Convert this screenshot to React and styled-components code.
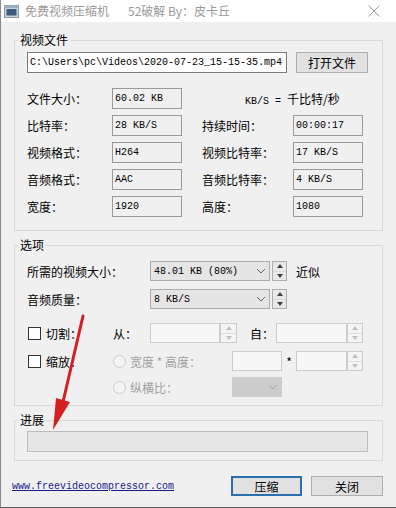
import React from 'react';
import styled, { createGlobalStyle } from 'styled-components';

const GlobalStyle = createGlobalStyle`
	html, body {
		margin: 0;
		padding: 0;
		background: #f0f0f0;
	}
	body {
		font-family: "Noto Sans CJK SC", "Noto Sans", sans-serif;
		font-size: 12px;
		color: #000;
	}
`;

const CJK = `"Noto Sans CJK SC", "Noto Sans", sans-serif`;
const MONO = `"Liberation Mono", "DejaVu Sans Mono", monospace`;

const Window = styled.div`
	position: relative;
	width: 395px;
	height: 507px;
	background: #f0f0f0;
	border-left: 1px solid #8a8a8a;
	border-bottom: 1px solid #5a5a5a;
	overflow: hidden;
	font-family: ${CJK};
	font-size: 12px;
`;

const TitleBar = styled.div`
	height: 22px;
	background: #ffffff;
	display: flex;
	align-items: center;
	padding: 0 0 0 3px;
	color: #999;
	font-size: 12px;
	line-height: 16px;
`;

const TitleText = styled.span`
	margin-left: ${(p) => p.$gap || 0}px;
	white-space: pre;
`;

const CloseButton = styled.div`
	margin-left: auto;
	width: 44px;
	height: 22px;
	display: flex;
	align-items: center;
	justify-content: center;
`;

const Body = styled.div`
	padding: 0 13px;
`;

const Group = styled.fieldset`
	margin: ${(p) => p.$top}px 0 0 0;
	padding: 0;
	border: 1px solid #d9d9d9;
	min-width: 0;
`;

const Legend = styled.legend`
	margin-left: 3px;
	padding: 0 2px;
	font-size: 12px;
	line-height: 16px;
	height: 16px;
`;

const GroupInner = styled.div`
	padding: ${(p) => p.$pad};
`;

const Row = styled.div`
	display: flex;
	align-items: center;
	height: ${(p) => p.$h || 20}px;
	margin-top: ${(p) => p.$top || 0}px;
`;

const PathInput = styled.div`
	width: 256px;
	height: 19px;
	border: 1px solid #7a7a7a;
	background: #fff;
	font-family: ${MONO};
	font-size: 10px;
	line-height: 19px;
	padding-left: 2px;
	white-space: nowrap;
	overflow: hidden;
`;

const Button = styled.div`
	box-sizing: border-box;
	width: ${(p) => p.$w}px;
	height: ${(p) => p.$h || 20}px;
	margin-left: ${(p) => p.$left || 0}px;
	background: #e1e1e1;
	border: ${(p) => (p.$focus ? '2px solid #2b6fae' : '1px solid #adadad')};
	display: flex;
	align-items: center;
	justify-content: center;
	font-size: 12px;
`;

const InfoGrid = styled.div`
	display: grid;
	grid-template-columns: 85px 70px 20px 91px 70px;
	grid-auto-rows: 21px;
	row-gap: 6px;
	align-items: center;
	margin-top: 15px;
`;

const InfoLabel = styled.div`
	grid-column: ${(p) => p.$col};
	white-space: nowrap;
`;

const InfoBox = styled.div`
	grid-column: ${(p) => p.$col};
	box-sizing: border-box;
	height: 21px;
	border: 1px solid #9a9a9a;
	background: #f0f0f0;
	font-family: ${MONO};
	font-size: 10px;
	line-height: 19px;
	padding-left: 2px;
	white-space: nowrap;
`;

const Note = styled.div`
	grid-column: 3 / 6;
	padding-left: 63px;
	white-space: nowrap;
`;

const Mono = styled.span`
	font-family: ${MONO};
	font-size: 10px;
`;

const Cell = styled.div`
	box-sizing: border-box;
	width: ${(p) => p.$w}px;
	padding-left: ${(p) => p.$pl || 0}px;
	flex: none;
	display: flex;
	align-items: center;
	justify-content: ${(p) => (p.$center ? 'center' : 'flex-start')};
	white-space: nowrap;
	color: ${(p) => (p.$disabled ? '#a0a0a0' : '#000')};
`;

const Combo = styled.div`
	box-sizing: border-box;
	width: ${(p) => p.$w}px;
	height: 20px;
	border: 1px solid ${(p) => (p.$disabled ? '#cccccc' : '#acacac')};
	background: ${(p) => (p.$disabled ? '#cccccc' : '#e5e5e5')};
	display: flex;
	align-items: center;
	padding: 0 3px 0 3px;
	font-family: ${MONO};
	font-size: 10px;
	flex: none;
`;

const ComboText = styled.span`
	flex: 1;
	white-space: nowrap;
`;

const Spin = styled.div`
	box-sizing: border-box;
	width: ${(p) => p.$w || 15}px;
	height: 20px;
	margin-left: ${(p) => p.$left || 0}px;
	border: 1px solid ${(p) => (p.$disabled ? '#cccccc' : '#adadad')};
	background: ${(p) => (p.$disabled ? '#f4f4f4' : '#e8e8e8')};
	display: flex;
	flex-direction: column;
	flex: none;
`;

const SpinHalf = styled.div`
	flex: 1;
	display: flex;
	align-items: center;
	justify-content: center;
	& + & {
		border-top: 1px solid ${(p) => (p.$disabled ? '#dddddd' : '#b5b5b5')};
	}
`;

const TextBox = styled.div`
	box-sizing: border-box;
	width: ${(p) => p.$w}px;
	height: 20px;
	border: 1px solid #cccccc;
	background: #f7f7f7;
	flex: none;
`;

const CheckBox = styled.div`
	box-sizing: border-box;
	width: 13px;
	height: 13px;
	border: 1px solid #333;
	background: #fff;
	margin: 0 5px 0 1px;
	flex: none;
`;

const Radio = styled.div`
	box-sizing: border-box;
	width: 13px;
	height: 13px;
	border-radius: 50%;
	border: 1px solid #cccccc;
	background: #f4f4f4;
	margin-right: 4px;
	flex: none;
`;

const Progress = styled.div`
	box-sizing: border-box;
	width: 341px;
	height: 21px;
	border: 1px solid #bcbcbc;
	background: #e6e6e6;
`;

const Footer = styled.div`
	display: flex;
	align-items: center;
	height: 20px;
	margin: 15px 0 0 -2px;
`;

const Link = styled.a`
	font-family: ${MONO};
	font-size: 10px;
	color: #1a1a8c;
	text-decoration: underline;
	margin-right: auto;
`;

const Arrow = styled.svg`
	position: absolute;
	left: 0;
	top: 0;
	pointer-events: none;
`;

const Chevron = ({ color = '#606060' }) => (
	<svg width="10" height="6" viewBox="0 0 10 6">
		<path d="M1 1 L5 5 L9 1" fill="none" stroke={color} strokeWidth="1" />
	</svg>
);

const Spinner = ({ w, left, disabled }) => {
	const c = disabled ? '#c0c0c0' : '#404040';
	return (
		<Spin $w={w} $left={left} $disabled={disabled}>
			<SpinHalf $disabled={disabled}>
				<svg width="6" height="4" viewBox="0 0 6 4">
					<path d="M0 4 L3 0 L6 4 Z" fill={c} />
				</svg>
			</SpinHalf>
			<SpinHalf $disabled={disabled}>
				<svg width="6" height="4" viewBox="0 0 6 4">
					<path d="M0 0 L3 4 L6 0 Z" fill={c} />
				</svg>
			</SpinHalf>
		</Spin>
	);
};

const info = [
	['比特率：', '28 KB/S', '持续时间：', '00:00:17'],
	['视频格式：', 'H264', '视频比特率：', '17 KB/S'],
	['音频格式：', 'AAC', '音频比特率：', '4 KB/S'],
	['宽度：', '1920', '高度：', '1080']
];

export default function App() {
	return (
		<>
			<GlobalStyle />
			<Window>
				<TitleBar>
					<svg width="15" height="13" viewBox="0 0 15 13">
						<rect x="0.5" y="0.5" width="14" height="12" fill="#c9d3de" stroke="#8a9aae" />
						<rect x="2.5" y="4" width="10" height="6.5" fill="#3f5a7a" />
						<rect x="0.5" y="0.5" width="14" height="2.5" fill="#9fb0c4" />
					</svg>
					<TitleText $gap={6}>免费视频压缩机</TitleText>
					<TitleText $gap={19}>52破解 By：皮卡丘</TitleText>
					<CloseButton>
						<svg width="12" height="12" viewBox="0 0 12 12">
							<path d="M0.5 0.5 L11.5 11.5 M11.5 0.5 L0.5 11.5" stroke="#999" strokeWidth="1" />
						</svg>
					</CloseButton>
				</TitleBar>
				<Body>
					<Group $top={10}>
						<Legend>视频文件</Legend>
						<GroupInner $pad="4px 0 13px 12px">
							<Row $h={21}>
								<PathInput>C:\Users\pc\Videos\2020-07-23_15-15-35.mp4</PathInput>
								<Button $w={72} $h={21} $left={9}>
									打开文件
								</Button>
							</Row>
							<InfoGrid>
								<InfoLabel $col={1}>文件大小：</InfoLabel>
								<InfoBox $col={2}>60.02 KB</InfoBox>
								<Note>
									<Mono>KB/S = </Mono>千比特/秒
								</Note>
								{info.map(([l1, v1, l2, v2]) => (
									<React.Fragment key={l1}>
										<InfoLabel $col={1}>{l1}</InfoLabel>
										<InfoBox $col={2}>{v1}</InfoBox>
										<InfoLabel $col={4}>{l2}</InfoLabel>
										<InfoBox $col={5}>{v2}</InfoBox>
									</React.Fragment>
								))}
							</InfoGrid>
						</GroupInner>
					</Group>

					<Group $top={6}>
						<Legend>选项</Legend>
						<GroupInner $pad="8px 0 8px 12px">
							<Row>
								<Cell $w={123}>所需的视频大小：</Cell>
								<Combo $w={120}>
									<ComboText>48.01 KB (80%)</ComboText>
									<Chevron />
								</Combo>
								<Spinner left={2} />
								<Cell $w={49} $pl={9}>
									近似
								</Cell>
							</Row>
							<Row $top={8}>
								<Cell $w={123}>音频质量：</Cell>
								<Combo $w={120}>
									<ComboText>8 KB/S</ComboText>
									<Chevron />
								</Combo>
								<Spinner left={2} />
							</Row>
							<Row $top={14}>
								<Cell $w={86}>
									<CheckBox />
									切割：
								</Cell>
								<Cell $w={37}>从：</Cell>
								<TextBox $w={70} />
								<Spinner w={17} disabled />
								<Cell $w={39} $pl={13}>
									自：
								</Cell>
								<TextBox $w={71} />
								<Spinner w={16} disabled />
							</Row>
							<Row $top={8}>
								<Cell $w={86}>
									<CheckBox />
									缩放：
								</Cell>
								<Cell $w={119} $disabled>
									<Radio />
									宽度 * 高度：
								</Cell>
								<TextBox $w={50} />
								<Cell $w={14} $center>
									*
								</Cell>
								<TextBox $w={51} />
								<Spinner w={16} disabled />
							</Row>
							<Row $top={6}>
								<Cell $w={86} />
								<Cell $w={119} $disabled>
									<Radio />
									纵横比：
								</Cell>
								<Combo $w={50} $disabled>
									<ComboText />
									<Chevron color="#a8a8a8" />
								</Combo>
							</Row>
						</GroupInner>
					</Group>

					<Group $top={6}>
						<Legend>进展</Legend>
						<GroupInner $pad="3px 0 8px 12px">
							<Progress />
						</GroupInner>
					</Group>

					<Footer>
						<Link href="#">www.freevideocompressor.com</Link>
						<Button $w={71} $focus>
							压缩
						</Button>
						<Button $w={72} $left={9}>
							关闭
						</Button>
					</Footer>
				</Body>

				<Arrow width="396" height="508" viewBox="0 0 396 508">
					<path d="M82 316 L62 402" stroke="#d42020" strokeWidth="3" strokeLinecap="round" fill="none" />
					<path d="M52 430 L55 398 L69 402 Z" fill="#d42020" />
				</Arrow>
			</Window>
		</>
	);
}
